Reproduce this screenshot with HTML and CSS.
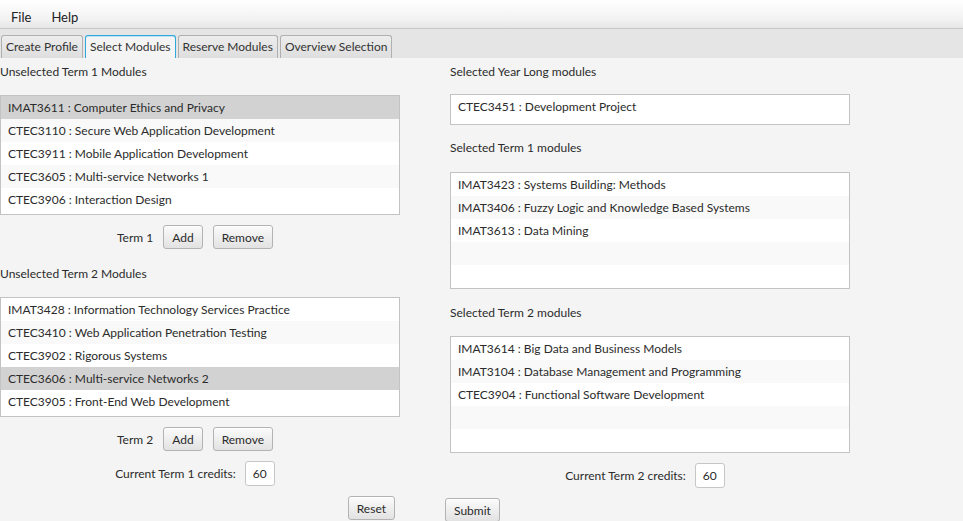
FILE: index.html
```html
<!DOCTYPE html>
<html>
<head>
<meta charset="utf-8">
<link rel="stylesheet" href="styles.css">
</head>
<body>
<div class="menubar">
  <span class="menu">File</span>
  <span class="menu">Help</span>
</div>
<div class="tabbar">
  <div class="tab">Create Profile</div>
  <div class="tab active">Select Modules</div>
  <div class="tab">Reserve Modules</div>
  <div class="tab">Overview Selection</div>
</div>
<div class="content">
  <div class="col left">
    <div class="label first">Unselected Term 1 Modules</div>
    <div class="list l5">
      <div class="row sel">IMAT3611 : Computer Ethics and Privacy</div>
      <div class="row">CTEC3110 : Secure Web Application Development</div>
      <div class="row">CTEC3911 : Mobile Application Development</div>
      <div class="row">CTEC3605 : Multi-service Networks 1</div>
      <div class="row">CTEC3906 : Interaction Design</div>
    </div>
    <div class="actions">
      <span class="txt">Term 1</span>
      <button class="btn">Add</button>
      <button class="btn">Remove</button>
    </div>
    <div class="label second">Unselected Term 2 Modules</div>
    <div class="list l5">
      <div class="row">IMAT3428 : Information Technology Services Practice</div>
      <div class="row">CTEC3410 : Web Application Penetration Testing</div>
      <div class="row">CTEC3902 : Rigorous Systems</div>
      <div class="row sel">CTEC3606 : Multi-service Networks 2</div>
      <div class="row">CTEC3905 : Front-End Web Development</div>
    </div>
    <div class="actions">
      <span class="txt">Term 2</span>
      <button class="btn">Add</button>
      <button class="btn">Remove</button>
    </div>
    <div class="credits">
      <span class="txt">Current Term 1 credits:</span>
      <span class="field">60</span>
    </div>
    <div class="bottom end">
      <button class="btn">Reset</button>
    </div>
  </div>
  <div class="col right">
    <div class="label first">Selected Year Long modules</div>
    <div class="list l1">
      <div class="row">CTEC3451 : Development Project</div>
    </div>
    <div class="label rlabel">Selected Term 1 modules</div>
    <div class="list l5r t1">
      <div class="row">IMAT3423 : Systems Building: Methods</div>
      <div class="row">IMAT3406 : Fuzzy Logic and Knowledge Based Systems</div>
      <div class="row">IMAT3613 : Data Mining</div>
      <div class="row"></div>
      <div class="row"></div>
    </div>
    <div class="label rlabel r2">Selected Term 2 modules</div>
    <div class="list l5r t2">
      <div class="row">IMAT3614 : Big Data and Business Models</div>
      <div class="row">IMAT3104 : Database Management and Programming</div>
      <div class="row">CTEC3904 : Functional Software Development</div>
      <div class="row"></div>
      <div class="row"></div>
    </div>
    <div class="credits rcredits">
      <span class="txt">Current Term 2 credits:</span>
      <span class="field">60</span>
    </div>
    <div class="bottom start">
      <button class="btn">Submit</button>
    </div>
  </div>
</div>
</body>
</html>
```

FILE: styles.css
```css
html, body {
  margin: 0;
  padding: 0;
  width: 963px;
  height: 521px;
  overflow: hidden;
  background: #f4f4f4;
  font-family: "Lato", "Liberation Sans", sans-serif;
  font-size: 12px;
  color: #2b2b2b;
}

.menubar {
  height: 28px;
  display: flex;
  align-items: center;
  padding-left: 1px;
  background: linear-gradient(#ffffff, #f2f2f2 70%, #e6e6e6);
  border-bottom: 1px solid #c9c9c9;
}

.menu {
  padding: 0 10px;
  font-size: 13px;
  color: #222;
  margin-top: 6px;
}

.tabbar {
  height: 29px;
  background: #e5e5e5;
  display: flex;
  align-items: flex-end;
  padding-left: 1px;
  gap: 2px;
}

.tab {
  height: 22px;
  line-height: 22px;
  padding: 0 4px;
  border: 1px solid #b0b0b0;
  border-bottom: none;
  border-radius: 3px 3px 0 0;
  background: linear-gradient(#ededed, #dedede);
  color: #333;
  font-size: 12px;
}

.tab.active {
  background: #f4f4f4;
  border-color: #2fa8dc;
  box-shadow: inset 0 1px 0 #bfe3f3;
}

.content {
  display: flex;
  gap: 50px;
}

.col {
  width: 400px;
  display: flex;
  flex-direction: column;
}

.label {
  height: 16px;
  line-height: 16px;
}

.label.first { margin-top: 6px; }
.left .label.second { margin-top: 17px; }
.right .label.rlabel { margin-top: 15px; }
.right .label.r2 { margin-top: 16px; }

.list {
  background: #fff;
  border: 1px solid #c3c3c3;
  box-sizing: border-box;
  overflow: hidden;
}

.left .list { margin-top: 15px; height: 120px; }
.right .list.l1 { margin-top: 14px; height: 31px; }
.right .list.t1 { margin-top: 16px; height: 117px; }
.right .list.t2 { margin-top: 15px; height: 117px; }

.row {
  height: 23px;
  line-height: 23px;
  padding-left: 7px;
  background: #fff;
  white-space: nowrap;
}

.row:nth-child(even) { background: #f9f9f9; }
.row.sel { background: #d2d2d2; }

.actions {
  display: flex;
  justify-content: center;
  align-items: center;
  gap: 10px;
  margin-top: 10px;
  padding-right: 10px;
}

.btn {
  height: 24px;
  padding: 0 8px;
  font-family: inherit;
  font-size: 12px;
  color: #2b2b2b;
  border: 1px solid #b3b3b3;
  border-radius: 3px;
  background: linear-gradient(#fbfbfb, #e2e2e2);
  box-shadow: inset 0 1px 0 #ffffff;
}

.credits {
  display: flex;
  justify-content: center;
  align-items: center;
  gap: 9px;
  margin-top: 10px;
  padding-right: 10px;
}

.rcredits { margin-top: 10px; }

.field {
  width: 30px;
  height: 25px;
  line-height: 23px;
  box-sizing: border-box;
  border: 1px solid #c6c6c6;
  border-radius: 3px;
  background: #fff;
  text-align: center;
}

.bottom {
  display: flex;
  margin-top: 10px;
}

.bottom.end { justify-content: flex-end; padding-right: 5px; }
.bottom.start { justify-content: flex-start; margin-left: -5px; }
```
